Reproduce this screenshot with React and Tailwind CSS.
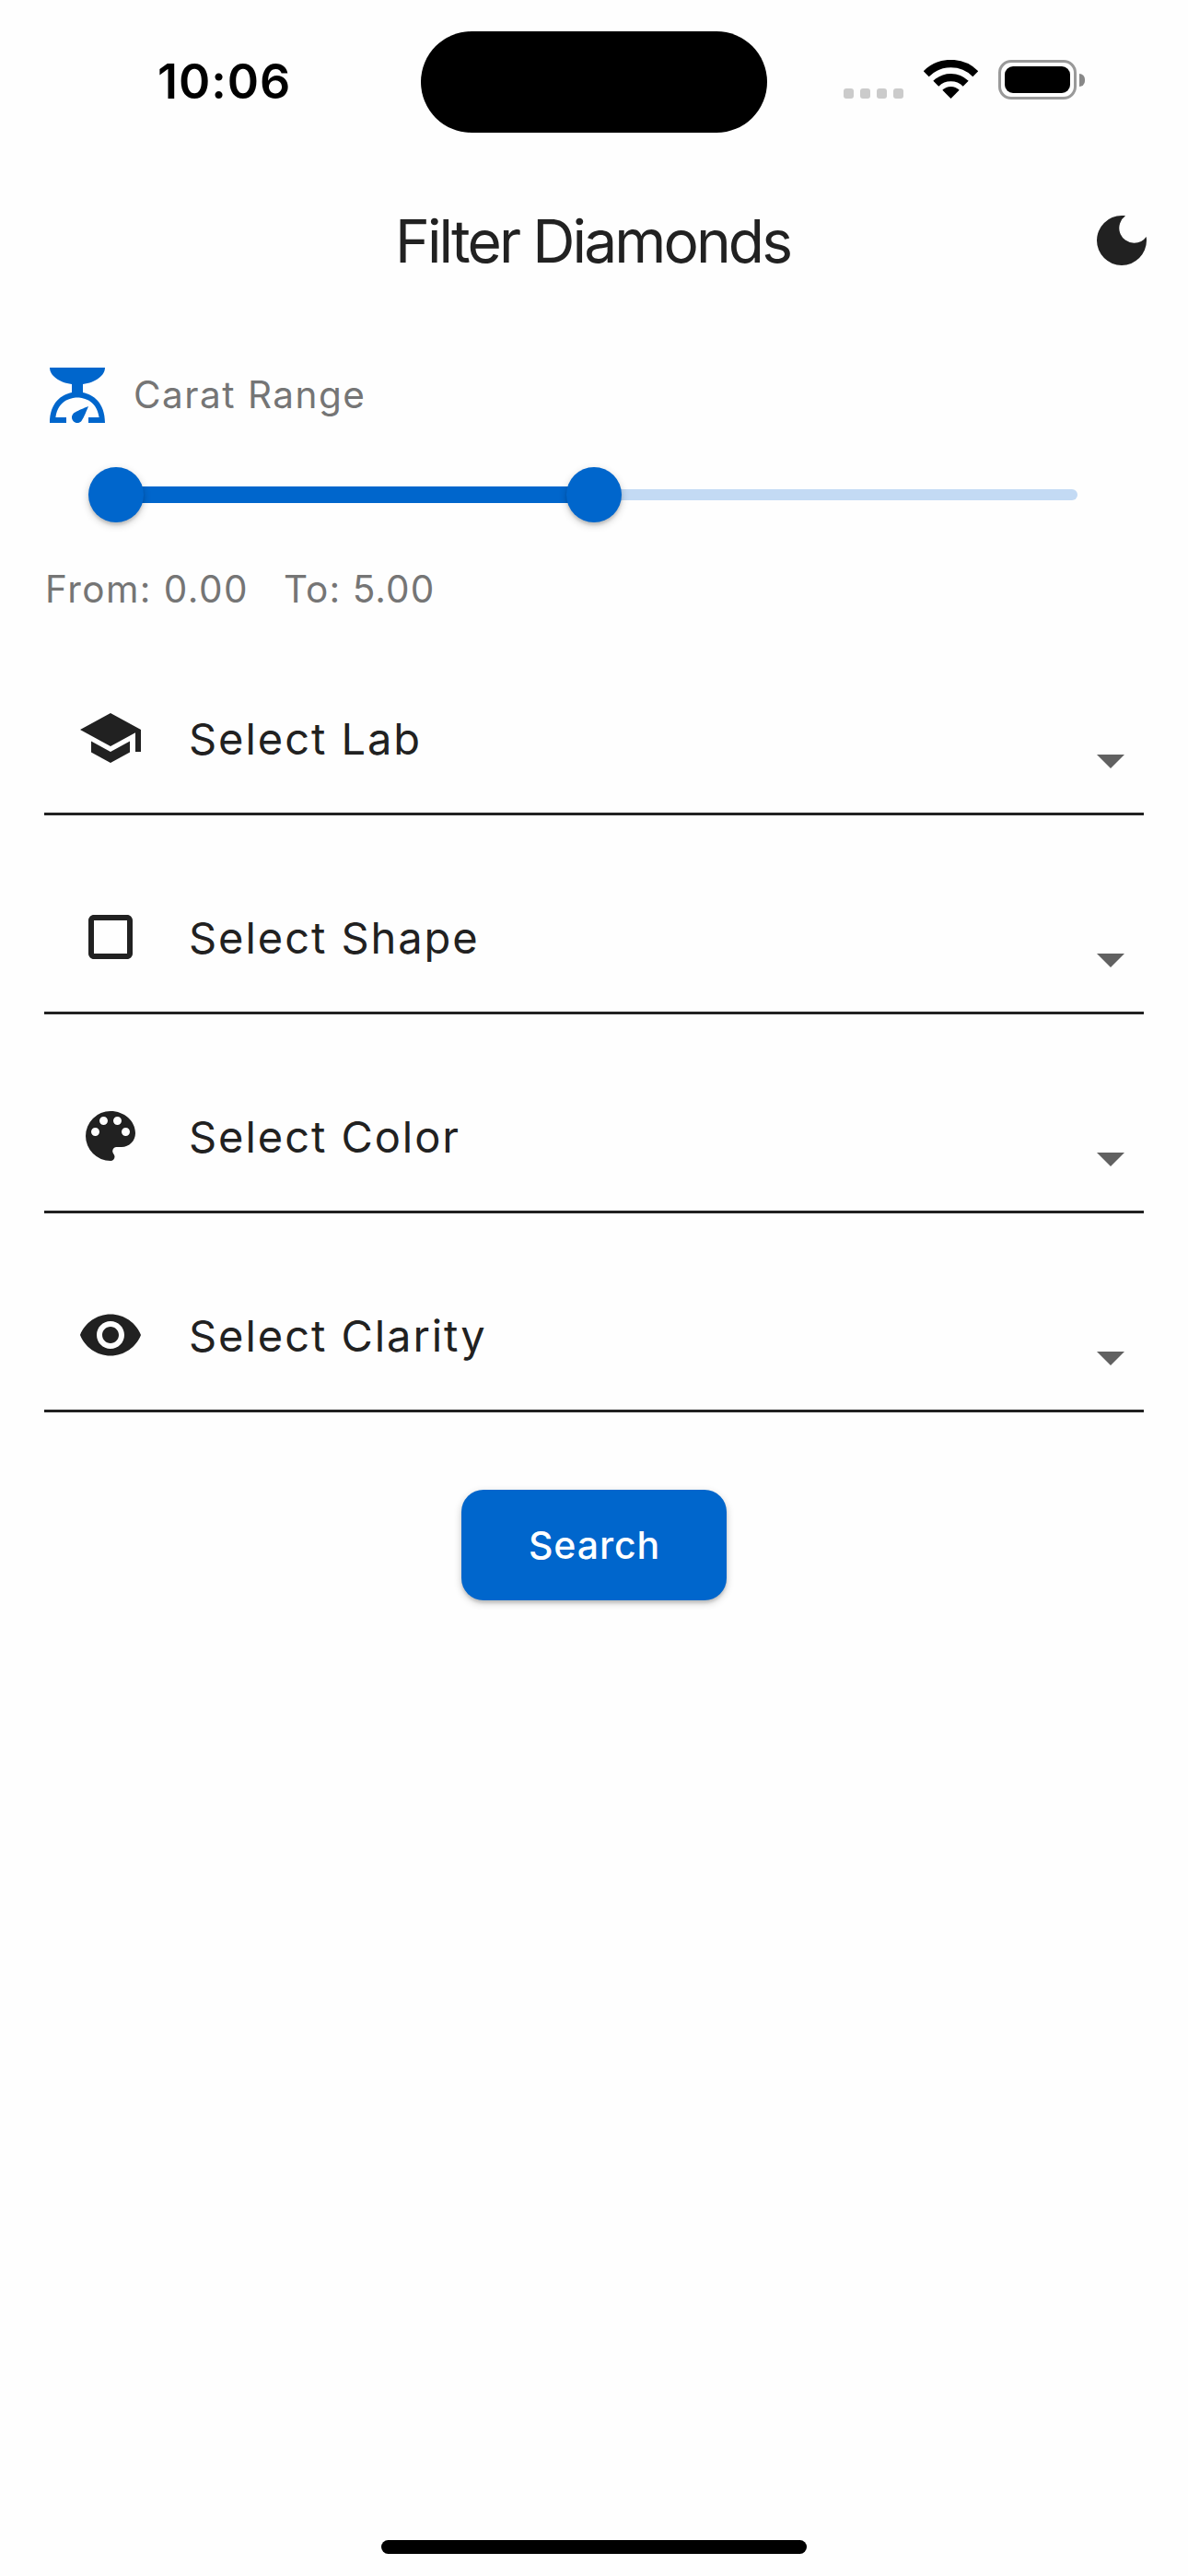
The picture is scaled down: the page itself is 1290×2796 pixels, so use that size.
import { MdDarkMode, MdScale, MdSchool, MdCropSquare, MdColorLens, MdVisibility, MdArrowDropDown } from "react-icons/md";

const fields = [
  { label: "Select Lab", Icon: MdSchool },
  { label: "Select Shape", Icon: MdCropSquare },
  { label: "Select Color", Icon: MdColorLens },
  { label: "Select Clarity", Icon: MdVisibility },
];

function StatusBar() {
  return (
    <div className="flex h-[177px] shrink-0 items-start text-black">
      <div className="mt-[58px] ml-[171px] w-[286px] text-[52px] leading-[61px] font-semibold tracking-[0.95px]">10:06</div>
      <div className="mt-[34px] h-[110px] w-[376px] rounded-full bg-black" />
      <div className="mt-[96px] ml-[83px] flex gap-[7px]">
        {[0, 1, 2, 3].map((dot) => (
          <span key={dot} className="size-[11px] rounded-[3px] bg-[#cbcbcb]" />
        ))}
      </div>
      <svg className="mt-[65px] ml-[22px] h-[42px] w-[59px]" viewBox="0 0 59 42" fill="none" stroke="currentColor">
        <path d="M2.7 15.2A37.8 37.8 0 0 1 56.3 15.2" strokeWidth="8.4" />
        <path d="M13.3 25.8A22.9 22.9 0 0 1 45.7 25.8" strokeWidth="8.4" />
        <path d="M29.5 42L20.3 32.8A13 13 0 0 1 38.7 32.8Z" fill="currentColor" stroke="none" />
      </svg>
      <div className="mt-[65px] ml-[22px] flex items-center gap-[3px]">
        <div className="h-[43px] w-[85px] rounded-[14px] border-[3px] border-[#999999] p-1">
          <div className="h-[29px] w-[71px] rounded-[9px] bg-black" />
        </div>
        <div className="h-[14px] w-[6px] rounded-r-[7px] bg-[#888888]" />
      </div>
    </div>
  );
}

function Thumb({ className }) {
  return (
    <span
      className={`absolute top-[42px] size-[60px] rounded-full bg-[#0066cc] shadow-[0_3px_3px_rgba(0,0,0,0.12),0_3px_9px_rgba(0,0,0,0.2)] ${className}`}
    />
  );
}

function RangeSlider() {
  return (
    <div className="relative ml-[120px] flex h-[144px] w-[1050px] items-center">
      <div className="h-[18px] w-[525px] rounded-l-full bg-[#0066cc]" />
      <div className="h-[12px] flex-1 rounded-r-full bg-[#c3daf4]" />
      <Thumb className="-left-[24px]" />
      <Thumb className="left-[495px]" />
    </div>
  );
}

function SelectField({ label, Icon }) {
  return (
    <button className="flex h-[216px] w-full items-start border-b-[3px] border-[#212121] pt-[96px] pr-0 pl-[36px] text-left">
      <Icon size={72} />
      <span className="mt-px ml-[49px] flex-1 text-[47px] leading-[72px] tracking-[1.95px]">{label}</span>
      <MdArrowDropDown size={72} className="mt-[24px] text-[#616161]" />
    </button>
  );
}

export default function App() {
  return (
    <div className="flex h-[2796px] w-[1290px] flex-col overflow-hidden bg-[#fefefe] font-['Inter',sans-serif] text-[#212121]">
      <StatusBar />
      <header className="flex h-[168px] shrink-0 items-center pr-[36px] pl-[429px]">
        <h1 className="mt-[2px] flex-1 text-[64px] leading-[80px] tracking-[-2.88px] whitespace-nowrap">Filter Diamonds</h1>
        <MdDarkMode size={72} />
      </header>

      <main className="flex flex-col pt-[48px] text-[40.5px]">
        <div className="flex h-[72px] items-center gap-[25px] px-[48px]">
          <MdScale size={72} className="text-[#0066cc]" />
          <span className="leading-[74px] tracking-[1.5px] text-[#757575]">Carat Range</span>
        </div>
        <RangeSlider />
        <div className="flex h-[60px] px-[48px] leading-[62px] text-[#757575]">
          <span className="w-[260px] pl-px tracking-[1.45px]">From: 0.00</span>
          <span className="tracking-[1.1px]">To: 5.00</span>
        </div>
        <div className="flex flex-col px-[48px]">
          {fields.map((field) => (
            <SelectField key={field.label} {...field} />
          ))}
        </div>
        <button className="mt-[84px] h-[120px] w-[288px] self-center rounded-[24px] bg-[#0066cc] pt-[2px] pl-px text-[41px] font-medium tracking-[0.9px] text-white shadow-[0_3px_3px_rgba(0,0,0,0.12),0_3px_9px_rgba(0,0,0,0.2)]">
          Search
        </button>
      </main>

      <div className="mt-auto mb-[24px] h-[15px] w-[462px] shrink-0 self-center rounded-full bg-black" />
    </div>
  );
}
